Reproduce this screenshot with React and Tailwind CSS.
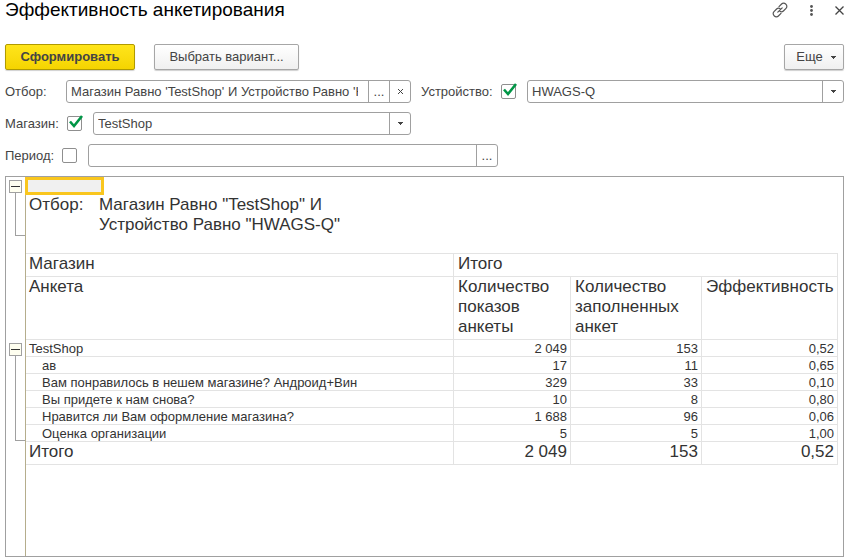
import React, { useState } from "react";

const ROWS = [
    { name: "TestShop", shown: "2 049", filled: "153", rate: "0,52" },
    { name: "ав", shown: "17", filled: "11", rate: "0,65", nested: true },
    { name: "Вам понравилось в нешем магазине? Андроид+Вин", shown: "329", filled: "33", rate: "0,10", nested: true },
    { name: "Вы придете к нам снова?", shown: "10", filled: "8", rate: "0,80", nested: true },
    { name: "Нравится ли Вам оформление магазина?", shown: "1 688", filled: "96", rate: "0,06", nested: true },
    { name: "Оценка организации", shown: "5", filled: "5", rate: "1,00", nested: true },
];

const Caret = () => (
    <svg width="5" height="3" viewBox="0 0 5 3" fill="#444" aria-hidden="true">
        <path d="M0 0h5v1H4v1H3v1H2V2H1V1H0z" />
    </svg>
);

const LinkIcon = () => (
    <svg width="16" height="16" viewBox="0 0 16 16" fill="none" stroke="#555" strokeWidth="1.2" strokeLinecap="round">
        <path d="M7 4.6 9.6 2a2.8 2.8 0 0 1 4 0l.4.4a2.8 2.8 0 0 1 0 4L11.4 9a2.8 2.8 0 0 1-3.6.3" />
        <path d="M9 11.4 6.4 14a2.8 2.8 0 0 1-4 0L2 13.6a2.8 2.8 0 0 1 0-4L4.600 7a2.8 2.8 0 0 1 3.600-.3" />
        <path d="M5.800 10.200l4.400-4.400" />
    </svg>
);

const CheckBox = ({ id, defaultChecked }) => (
    <span className="relative flex h-[15px] w-[15px] shrink-0">
        <input
            id={id}
            type="checkbox"
            defaultChecked={defaultChecked}
            className="peer h-[15px] w-[15px] appearance-none rounded-xs border border-[#8f8f8f] bg-white"
        />
        <svg
            className="pointer-events-none absolute -top-px left-0 hidden peer-checked:block"
            width="17" height="15" viewBox="0 0 17 15" fill="none" stroke="#009646" strokeWidth="2.6"
        >
            <path d="M3 6.500 7 11 15 1" />
        </svg>
    </span>
);

const FieldButton = ({ label, children }) => (
    <button aria-label={label} className="flex w-[21px] shrink-0 items-center justify-center border-l border-[#a0a0a0]">
        {children}
    </button>
);

const Field = ({ className, children }) => (
    <div className={`flex h-[23px] overflow-hidden rounded-[3px] border border-[#a0a0a0] bg-white ${className}`}>
        {children}
    </div>
);

const SelectField = ({ label, value, className }) => (
    <Field className={`relative ${className}`}>
        <select aria-label={label} className="w-full appearance-none pl-1 pr-6 outline-none">
            <option>{value}</option>
        </select>
        <span className="pointer-events-none absolute inset-y-0 right-0 flex w-[21px] items-center justify-center border-l border-[#a0a0a0]">
            <Caret />
        </span>
    </Field>
);

const Toggle = ({ open, onClick }) => (
    <button
        onClick={onClick}
        aria-label={open ? "Свернуть" : "Развернуть"}
        className="flex h-[13px] w-[13px] shrink-0 items-center justify-center border border-[#a0a0a0] bg-[#fffff0]"
    >
        <svg width="9" height="9" viewBox="0 0 9 9" fill="#333">
            <path d="M0 4h9v1H0z" />
            {!open && <path d="M4 0h1v9H4z" />}
        </svg>
    </button>
);

const App = () => {
    const [filterOpen, setFilterOpen] = useState(true);
    const [groupOpen, setGroupOpen] = useState(true);

    const rows = groupOpen ? ROWS : ROWS.filter((row) => !row.nested);

    return (
        <div className="flex min-h-screen flex-col bg-white px-[5px] pb-[3px] font-['Liberation_Sans',Arial,sans-serif] text-[13px] text-[#444]">
            {/* Title */}
            <header className="flex h-5 items-center justify-between">
                <h1 className="text-[19px] leading-5 text-black">Эффективность анкетирования</h1>
                <div className="flex items-center">
                    <button aria-label="Ссылка" className="mr-[22px]"><LinkIcon /></button>
                    <button aria-label="Меню" className="mr-[22px]">
                        <svg width="3" height="11" viewBox="0 0 3 11" fill="#555">
                            <circle cx="1.500" cy="1.500" r="1.400" />
                            <circle cx="1.500" cy="5.500" r="1.400" />
                            <circle cx="1.500" cy="9.500" r="1.400" />
                        </svg>
                    </button>
                    <button aria-label="Закрыть">
                        <svg width="9" height="9" viewBox="0 0 9 9" stroke="#444" strokeWidth="1.300">
                            <path d="M.5.5l8 8M8.500.5l-8 8" />
                        </svg>
                    </button>
                </div>
            </header>

            {/* Commands */}
            <div className="mt-6 flex h-[26px] items-stretch">
                <button className="w-[130px] rounded-xs border border-[#b09a00] bg-linear-to-b from-[#ffe51a] to-[#f5d400] font-bold text-[#444] shadow-[0_1px_1px_#00000030]">
                    Сформировать
                </button>
                <button className="ml-[19px] w-[145px] rounded-xs border border-[#a6a6a6] bg-linear-to-b from-white to-[#f0f0f0] shadow-[0_1px_1px_#00000030]">
                    Выбрать вариант...
                </button>
                <button className="ml-auto flex w-[60px] items-center justify-center gap-2 rounded-xs border border-[#a6a6a6] bg-linear-to-b from-white to-[#f0f0f0] pl-1 shadow-[0_1px_1px_#00000030]">
                    Еще
                    <Caret />
                </button>
            </div>

            {/* Filters */}
            <div className="mt-[10px] flex flex-col gap-[9px]">
                <div className="flex items-center">
                    <label htmlFor="filter" className="w-[61px]">Отбор:</label>
                    <Field className="w-[345px]">
                        <input
                            id="filter"
                            readOnly
                            value="Магазин Равно 'TestShop' И Устройство Равно 'HWAGS-Q'"
                            className="ml-1 mr-[10px] min-w-0 flex-1 outline-none"
                        />
                        <FieldButton label="Выбрать">...</FieldButton>
                        <FieldButton label="Очистить">
                            <svg width="7" height="7" viewBox="0 0 7 7" stroke="#444">
                                <path d="M1 1l5 5M6 1l-5 5" />
                            </svg>
                        </FieldButton>
                    </Field>
                    <label htmlFor="device" className="ml-[10px] w-20">Устройство:</label>
                    <CheckBox id="device" defaultChecked />
                    <SelectField label="Устройство" value="HWAGS-Q" className="ml-[11px] flex-1" />
                </div>
                <div className="flex items-center">
                    <label htmlFor="shop" className="w-[62px]">Магазин:</label>
                    <CheckBox id="shop" defaultChecked />
                    <SelectField label="Магазин" value="TestShop" className="ml-[11px] w-[318px]" />
                </div>
                <div className="flex items-center">
                    <label htmlFor="period" className="w-[57px]">Период:</label>
                    <CheckBox id="period" />
                    <Field className="ml-[11px] w-[410px]">
                        <input aria-label="Период" className="min-w-0 flex-1 px-1 outline-none" />
                        <FieldButton label="Выбрать период">...</FieldButton>
                    </Field>
                </div>
            </div>

            {/* Report */}
            <main className="mt-[9px] flex flex-1 border border-[#a0a0a0] text-[#333]">
                {/* Outline of the groups */}
                <div className="flex w-[19px] shrink-0 flex-col pl-[3px] pt-[3px]">
                    <Toggle open={filterOpen} onClick={() => setFilterOpen(!filterOpen)} />
                    {filterOpen && <div className="ml-[6px] h-[43px] border-b border-l border-[#a0a0a0]"></div>}
                    <div className={filterOpen ? "h-[107px]" : "h-[110px]"}></div>
                    <Toggle open={groupOpen} onClick={() => setGroupOpen(!groupOpen)} />
                    {groupOpen && <div className="ml-[6px] h-[85px] border-b border-l border-[#a0a0a0]"></div>}
                </div>

                <div className="flex-1 border-l border-[#b5ad8c] pr-[5px]">
                    <div className="-ml-px h-[18px] w-[79px] border-[3px] border-[#f9c61e] bg-[#f0f0f0]"></div>
                    {filterOpen && (
                        <dl className="flex h-10 pl-[3px] text-[17px] leading-5">
                            <dt className="w-[70px]">Отбор:</dt>
                            <dd>Магазин Равно "TestShop" И<br />Устройство Равно "HWAGS-Q"</dd>
                        </dl>
                    )}

                    <table className="mt-[18px] w-full table-fixed border-separate border-spacing-0 border-t border-[#e3e3e3] text-left [&_td]:border-b [&_td]:border-r [&_td]:border-[#e3e3e3] [&_th]:border-b [&_th]:border-r [&_th]:border-[#e3e3e3] [&_th]:font-normal">
                        <colgroup>
                            <col />
                            <col className="w-[117px]" />
                            <col className="w-[131px]" />
                            <col className="w-[136px]" />
                        </colgroup>
                        <thead className="align-top text-[17px] leading-5">
                            <tr className="h-[23px]">
                                <th className="pl-[3px]">Магазин</th>
                                <th colSpan={3} className="pl-1">Итого</th>
                            </tr>
                            <tr className="h-[63px]">
                                <th className="pl-[3px]">Анкета</th>
                                <th className="pl-1">Количество показов анкеты</th>
                                <th className="pl-1">Количество заполненных анкет</th>
                                <th className="pl-1">Эффективность</th>
                            </tr>
                        </thead>
                        <tbody className="leading-[14px] [&_td]:pt-[2px]">
                            {rows.map((row) => (
                                <tr key={row.name} className="h-[17px]">
                                    <td className={row.nested ? "pl-4" : "pl-[3px]"}>{row.name}</td>
                                    <td className="pr-[3px] text-right">{row.shown}</td>
                                    <td className="pr-[3px] text-right">{row.filled}</td>
                                    <td className="pr-[3px] text-right">{row.rate}</td>
                                </tr>
                            ))}
                        </tbody>
                        <tfoot className="align-top text-[17px] leading-5">
                            <tr className="h-[23px]">
                                <td className="pl-[3px]">Итого</td>
                                <td className="pr-[3px] text-right">2 049</td>
                                <td className="pr-[3px] text-right">153</td>
                                <td className="pr-[3px] text-right">0,52</td>
                            </tr>
                        </tfoot>
                    </table>
                </div>
            </main>
        </div>
    );
};

export default App;
